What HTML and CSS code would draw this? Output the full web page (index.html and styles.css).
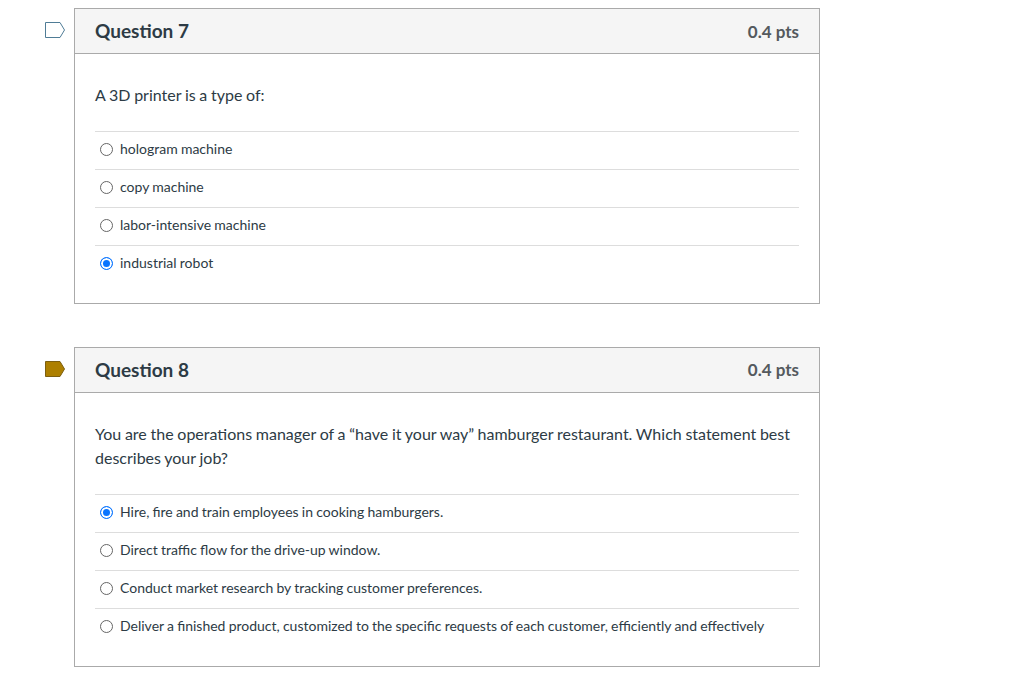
FILE: index.html
```html
<!DOCTYPE html>
<html lang="en">
<head>
<meta charset="utf-8">
<title>Quiz</title>
<link rel="stylesheet" href="styles.css">
</head>
<body>
<main class="quiz">
  <section class="question">
    <svg class="flag" width="21" height="17" viewBox="0 0 21 17"><path class="flag-off" d="M0.5 0.5H15L19.5 8L15 15.5H0.5Z"/></svg>
    <div class="card">
      <header class="card-head"><h2 class="q-title">Question 7</h2><span class="pts">0.4 pts</span></header>
      <div class="card-body">
        <p class="q-text">A 3D printer is a type of:</p>
        <ul class="answers">
          <li class="answer"><span class="radio"></span>hologram machine</li>
          <li class="answer"><span class="radio"></span>copy machine</li>
          <li class="answer"><span class="radio"></span>labor-intensive machine</li>
          <li class="answer"><span class="radio checked"></span>industrial robot</li>
        </ul>
      </div>
    </div>
  </section>
  <section class="question">
    <svg class="flag" width="21" height="17" viewBox="0 0 21 17"><path class="flag-on" d="M0.5 0.5H15L19.5 8L15 15.5H0.5Z"/></svg>
    <div class="card">
      <header class="card-head"><h2 class="q-title">Question 8</h2><span class="pts">0.4 pts</span></header>
      <div class="card-body">
        <p class="q-text">You are the operations manager of a “have it your way” hamburger restaurant. Which statement best describes your job?</p>
        <ul class="answers">
          <li class="answer"><span class="radio checked"></span>Hire, fire and train employees in cooking hamburgers.</li>
          <li class="answer"><span class="radio"></span>Direct traffic flow for the drive-up window.</li>
          <li class="answer"><span class="radio"></span>Conduct market research by tracking customer preferences.</li>
          <li class="answer"><span class="radio"></span>Deliver a finished product, customized to the specific requests of each customer, efficiently and effectively</li>
        </ul>
      </div>
    </div>
  </section>
</main>
</body>
</html>
```
FILE: styles.css
```css
* { box-sizing: border-box; }
html, body { margin: 0; background: #fff; }
body { font-family: Lato, "Open Sans", sans-serif; color: #2d3b45; }
.quiz { display: flex; flex-direction: column; gap: 42.8px; padding: 8px 0 0 45px; }
.question { display: flex; align-items: flex-start; gap: 8px; }
.flag { flex: none; margin-top: 14px; display: block; }
.flag-off { fill: #fff; stroke: #4f7c96; stroke-width: 1; }
.flag-on { fill: #ad7f00; stroke: #7d5f10; stroke-width: 1; }
.card { width: 746px; border: 1px solid #aaa; }
.card-head { height: 45px; display: flex; justify-content: space-between; align-items: center; padding: 0 20px; background: #f5f5f5; border-bottom: 1px solid #aaa; }
.q-title { margin: 0; font-size: 19px; font-weight: 700; padding-bottom: 1px; }
.pts { font-size: 17px; font-weight: 700; color: #54595e; }
.card-body { padding: 29px 20px 19.6px; }
.q-text { margin: 0 0 24.4px; font-size: 16px; line-height: 24px; word-spacing: -0.4px; }
.answers { list-style: none; margin: 0; padding: 0; }
.answer { height: 38px; display: flex; align-items: center; gap: 7px; padding: 0 0 5px 5px; border-top: 1px solid #ddd; font-size: 14px; word-spacing: -0.4px; }
.radio { flex: none; width: 13px; height: 13px; margin-top: 3px; border: 1px solid #666; border-radius: 50%; background: #fff; }
.radio.checked { border-color: #0a75ff; background: #0a75ff; box-shadow: inset 0 0 0 2px #fff; }
```
